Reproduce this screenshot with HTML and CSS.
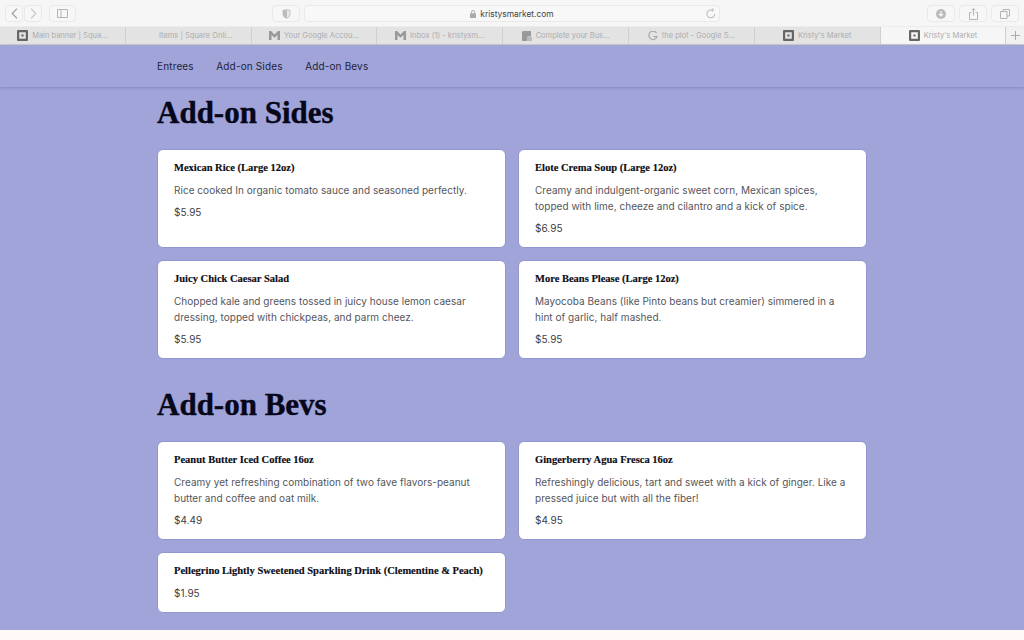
FILE: index.html
```html
<!DOCTYPE html>
<html lang="en">
<head>
<meta charset="utf-8">
<title>Kristy's Market</title>
<link rel="stylesheet" href="styles.css">
</head>
<body>
<div class="page">
  <header class="toolbar">
    <div class="tool-group tool-left">
      <div class="btn-pair">
        <span class="btn btn-nav"><svg width="7" height="11" viewBox="0 0 7 11"><path d="M6 .7 1.200 5.500 6 10.300" class="ic"/></svg></span>
        <span class="btn btn-nav"><svg width="7" height="11" viewBox="0 0 7 11"><path d="M1 .7l4.800 4.800L1 10.300" class="ic ic-light"/></svg></span>
      </div>
      <span class="btn btn-side"><svg width="11" height="9" viewBox="0 0 11 9"><path d="M.5.500h10v8H.5zM4 .500v8" class="ic ic-thin"/></svg></span>
    </div>
    <div class="tool-center">
      <span class="btn btn-act"><svg width="9" height="10" viewBox="0 0 9 10"><path d="M.5 1 4.500.2 8.500 1v4C8.500 7.300 6.500 9 4.500 9.800 2.500 9 .5 7.300.5 5z" class="ic-fill"/><path d="M5 1.300 7.700 1.800V5C7.700 6.500 6.300 8 5 8.700z" class="ic-fill-light"/></svg></span>
      <div class="address">
        <span class="address-text"><svg class="lock" width="6" height="8" viewBox="0 0 6 8"><path d="M1.400 3.400V2.200a1.600 1.600 0 0 1 3.200 0v1.200" fill="none" stroke="#aaa"/><rect y="3.200" width="6" height="4.800" rx=".6" fill="#aaa"/></svg>kristysmarket.com</span>
        <svg class="reload" width="10" height="11" viewBox="0 0 10 11"><path d="M8.800 5.900A3.900 3.900 0 1 1 5 2h2" class="ic ic-thin"/><path d="M5.800.4 7.600 2 5.800 3.600" class="ic ic-thin"/></svg>
      </div>
    </div>
    <div class="tool-group tool-right">
      <span class="btn btn-act"><svg width="10" height="10" viewBox="0 0 10 10"><circle cx="5" cy="5" r="5" fill="#bbb"/><path d="M5 2v5M3 5l2 2 2-2" stroke="#f6f6f6" stroke-width="1.200" fill="none"/></svg></span>
      <span class="btn btn-act"><svg width="9" height="12" viewBox="0 0 9 12"><path d="M2.500 4.500H.5v7h8v-7h-2M4.500 7.500V.7M2.800 2.200 4.500.6l1.700 1.600" class="ic ic-thin"/></svg></span>
      <span class="btn btn-act"><svg width="10" height="10" viewBox="0 0 10 10"><path d="M3 2.500V.5h6.500v6.500H7M.5 2.500H7v7H.5z" class="ic ic-thin"/></svg></span>
    </div>
  </header>

  <nav class="tabs">
    <div class="tab"><svg class="fav" width="11" height="11" viewBox="0 0 10 10"><path fill-rule="evenodd" d="M1 0h8a1 1 0 0 1 1 1v8a1 1 0 0 1-1 1H1a1 1 0 0 1-1-1V1a1 1 0 0 1 1-1zm1 2v6h6V2zm2 2h2v2H4z" fill="#666"/></svg><span>Main banner | Squa...</span></div>
    <div class="tab"><span class="fav fav-blank"></span><span>Items | Square Onli...</span></div>
    <div class="tab"><svg class="fav" width="11" height="9" viewBox="0 0 11 9"><path d="M0 0h2l3.500 3.500L9 0h2v9H8.500V4L5.500 6.800 2.500 4v5H0z" fill="#999"/></svg><span>Your Google Accou...</span></div>
    <div class="tab"><svg class="fav" width="11" height="9" viewBox="0 0 11 9"><path d="M0 0h2l3.500 3.500L9 0h2v9H8.500V4L5.500 6.800 2.500 4v5H0z" fill="#999"/></svg><span>Inbox (1) - kristysm...</span></div>
    <div class="tab"><svg class="fav" width="10" height="10" viewBox="0 0 10 10"><path d="M1 0h8v5.500H5.500V10H0V1z" fill="#999"/><path d="M6 6h4v4H6z" fill="#bbb"/></svg><span>Complete your Bus...</span></div>
    <div class="tab"><svg class="fav" width="10" height="10" viewBox="0 0 9 9"><path d="M7.700 1.700A3.800 3.800 0 1 0 8.200 5H4.800" fill="none" stroke="#aaa" stroke-width="1.100"/></svg><span>the plot - Google S...</span></div>
    <div class="tab"><svg class="fav" width="11" height="11" viewBox="0 0 10 10"><path fill-rule="evenodd" d="M1 0h8a1 1 0 0 1 1 1v8a1 1 0 0 1-1 1H1a1 1 0 0 1-1-1V1a1 1 0 0 1 1-1zm1 2v6h6V2zm2 2h2v2H4z" fill="#666"/></svg><span>Kristy's Market</span></div>
    <div class="tab tab-active"><svg class="fav" width="11" height="11" viewBox="0 0 10 10"><path fill-rule="evenodd" d="M1 0h8a1 1 0 0 1 1 1v8a1 1 0 0 1-1 1H1a1 1 0 0 1-1-1V1a1 1 0 0 1 1-1zm1 2v6h6V2zm2 2h2v2H4z" fill="#666"/></svg><span>Kristy's Market</span></div>
    <div class="tab-add"><svg width="9" height="9" viewBox="0 0 9 9"><path d="M4.500 0v9M0 4.500h9" stroke="#aaa" fill="none"/></svg></div>
  </nav>

  <div class="site">
    <div class="site-nav">
      <ul class="site-links">
        <li>Entrees</li>
        <li>Add-on Sides</li>
        <li>Add-on Bevs</li>
      </ul>
    </div>
    <main class="content">
      <section class="section">
        <h2 class="section-title">Add-on Sides</h2>
        <div class="grid">
          <article class="card">
            <h3 class="card-title">Mexican Rice (Large 12oz)</h3>
            <p class="card-desc">Rice cooked In organic tomato sauce and seasoned perfectly.</p>
            <p class="card-price">$5.95</p>
          </article>
          <article class="card">
            <h3 class="card-title">Elote Crema Soup (Large 12oz)</h3>
            <p class="card-desc">Creamy and indulgent-organic sweet corn, Mexican spices, topped with lime, cheeze and cilantro and a kick of spice.</p>
            <p class="card-price">$6.95</p>
          </article>
          <article class="card">
            <h3 class="card-title">Juicy Chick Caesar Salad</h3>
            <p class="card-desc">Chopped kale and greens tossed in juicy house lemon caesar dressing, topped with chickpeas, and parm cheez.</p>
            <p class="card-price">$5.95</p>
          </article>
          <article class="card">
            <h3 class="card-title">More Beans Please (Large 12oz)</h3>
            <p class="card-desc">Mayocoba Beans (like Pinto beans but creamier) simmered in a hint of garlic, half mashed.</p>
            <p class="card-price">$5.95</p>
          </article>
        </div>
      </section>
      <section class="section section-next">
        <h2 class="section-title">Add-on Bevs</h2>
        <div class="grid">
          <article class="card">
            <h3 class="card-title">Peanut Butter Iced Coffee 16oz</h3>
            <p class="card-desc">Creamy yet refreshing combination of two fave flavors-peanut butter and coffee and oat milk.</p>
            <p class="card-price">$4.49</p>
          </article>
          <article class="card">
            <h3 class="card-title">Gingerberry Agua Fresca 16oz</h3>
            <p class="card-desc">Refreshingly delicious, tart and sweet with a kick of ginger. Like a pressed juice but with all the fiber!</p>
            <p class="card-price">$4.95</p>
          </article>
          <article class="card">
            <h3 class="card-title">Pellegrino Lightly Sweetened Sparkling Drink (Clementine &amp; Peach)</h3>
            <p class="card-price">$1.95</p>
          </article>
        </div>
      </section>
    </main>
  </div>
  <div class="footer-strip"></div>
</div>
</body>
</html>
```
FILE: styles.css
```css
* { box-sizing: border-box; }
html, body { margin: 0; padding: 0; height: 640px; overflow: hidden; }
body { font-family: "Inter", "Liberation Sans", sans-serif; background: #fff8f4; }
.page { width: 1024px; height: 640px; display: flex; flex-direction: column; }

.toolbar { height: 26px; flex: none; background: #f6f6f6; display: flex; align-items: center; padding: 1px 5px 0; }
.tool-group { display: flex; align-items: center; }
.tool-left { gap: 7px; }
.tool-right { gap: 4px; margin-left: auto; }
.tool-center { display: flex; gap: 4px; align-items: center; margin-left: 196px; }
.btn-pair { display: flex; gap: 1px; }
.btn { height: 17px; border: 1px solid #e9e9e9; border-radius: 4px; display: flex; align-items: center; justify-content: center; background: #f7f7f7; }
.btn-nav { width: 18px; }
.btn-side { width: 27px; }
.btn-act { width: 28px; }
.address { width: 416px; height: 17px; border: 1px solid #e9e9e9; border-radius: 4px; background: #f8f8f8; display: flex; align-items: center; justify-content: center; position: relative; }
.address-text { font-size: 8.400px; color: #444; display: flex; align-items: center; gap: 4px; }
.reload { position: absolute; right: 3px; top: 2px; }
.ic { fill: none; stroke: #999; stroke-width: 1.100; }
.ic-light { stroke: #c4c4c4; }
.ic-thin { stroke: #b4b4b4; stroke-width: 1; }
.ic-fill { fill: #bdbdbd; }
.ic-fill-light { fill: #e8e8e8; }

.tabs { height: 19px; flex: none; display: flex; background: #e3e3e3; border-top: 1px solid #ececec; border-bottom: 1px solid #cfcfcf; }
.tab { width: 125.800px; flex: none; display: flex; align-items: center; justify-content: center; gap: 4px; font-size: 7.500px; color: #adadad; border-right: 1px solid #d0d0d0; white-space: nowrap; }
.tab-active { background: #f6f6f6; }
.tab-add { flex: 1; background: #f1f1f1; display: flex; align-items: center; justify-content: center; }
.fav { flex: none; }
.fav-blank { width: 11px; height: 11px; }

.site { flex: 1; background: #a0a4d9; display: flex; flex-direction: column; min-height: 0; }
.site-nav { height: 42px; flex: none; box-shadow: 0 1px 3px rgba(70, 70, 130, .3); padding-left: 157px; display: flex; align-items: center; }
.site-links { list-style: none; margin: 0; padding: 0; display: flex; gap: 22.500px; font-size: 10px; color: #23233c; letter-spacing: .15px; }
.content { width: 710px; margin: 0 auto; padding-top: 9px; }
.section-next { margin-top: 29px; }
.section-title { margin: 0 0 19px; font-family: "Liberation Serif", serif; font-size: 31px; font-weight: 700; line-height: 34px; color: #07071a; -webkit-text-stroke: .4px #07071a; }
.grid { display: grid; grid-template-columns: 349px 349px; gap: 12px; }
.card { background: #fff; border: 1px solid #9296d2; border-radius: 6px; padding: 10px 16px 11px; display: flex; flex-direction: column; gap: 6px; }
.card-title { margin: 0; font-family: "Liberation Serif", serif; font-size: 10.500px; font-weight: 700; line-height: 16px; color: #0b0b14; white-space: nowrap; -webkit-text-stroke: .15px #0b0b14; }
.card-desc, .card-price { margin: 0; font-size: 10px; line-height: 16px; color: #55555c; letter-spacing: .03px; }
.card-price { color: #3c3c42; }
.footer-strip { height: 10px; flex: none; background: #fff8f4; }
```
